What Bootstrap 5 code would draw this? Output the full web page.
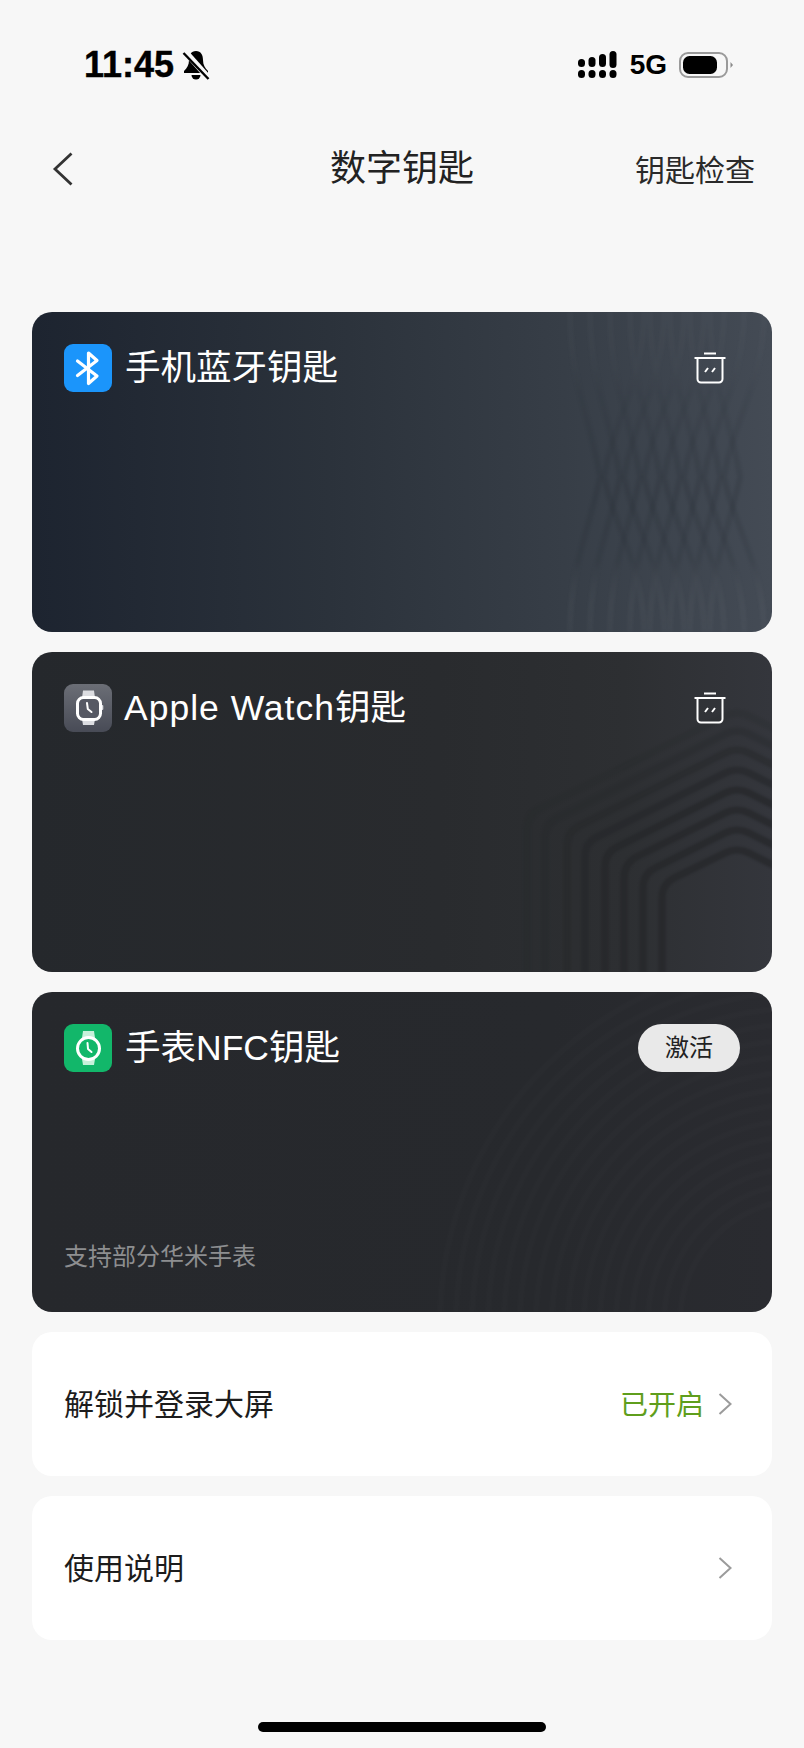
<!DOCTYPE html>
<html lang="zh-CN">
<head>
<meta charset="utf-8">
<title>数字钥匙</title>
<link rel="stylesheet" href="https://cdn.jsdelivr.net/npm/bootstrap@5.3.0/dist/css/bootstrap.min.css">
<style>
html,body{height:100%}
body{background:#f7f7f7;font-family:"Liberation Sans","Noto Sans CJK SC",sans-serif;color:#222;overflow:hidden}
.app-screen{width:804px;height:1748px}
.status-row{height:130px;padding:0 70px 0 84px}
.status-time{font-size:36px;font-weight:700;line-height:1;color:#000;-webkit-text-stroke:.4px #000}
.status-net{font-size:28px;font-weight:700;line-height:1;color:#000}
.head-row{height:76px;padding:2px 49px 0;display:grid;grid-template-columns:1fr auto 1fr;align-items:center}
.head-back{margin-left:3px}
.head-title{font-size:36px;font-weight:400;line-height:1.2;color:#222}
.head-link{font-size:30px;line-height:1.2;color:#2a2a2a;margin-top:3px}
.key-stack{margin-top:106px;padding:0 32px;gap:20px}
.key-card{height:320px;border:0;border-radius:20px;overflow:hidden;padding:32px 28px 38px 32px;color:#fff}
.key-blue{background:linear-gradient(90deg,#1d2430 0%,#2b323b 40%,#373e47 72%,#444b55 100%)}
.key-grey{background:linear-gradient(90deg,#25282c 0%,#292b2e 55%,#2d2f32 80%,#34363c 100%)}
.key-dark{background:linear-gradient(90deg,#26282c 0%,#27292d 70%,#2a2b30 100%)}
.key-art{position:absolute;left:0;top:0;width:740px;height:320px;filter:blur(.8px)}
.key-top,.key-note{position:relative}
.key-icon{width:48px;height:48px;border-radius:9px;flex:none}
.key-name{font-size:35.500px;line-height:48px;margin-left:13px}
.key-latin{margin-left:12px}
.key-latin span{letter-spacing:1px}
.trash-btn{width:32px;height:32px;margin-right:18px;display:block}
.activate-btn{width:102px;height:48px;padding:0;font-size:24px;line-height:46px;background:#e9e9e9;color:#222;border:0;margin-right:4px}
.key-note{font-size:24px;line-height:34px;color:#8d8e90}
.set-row{height:144px;border-radius:20px;padding:0 40px 0 32px;font-size:30px;color:#1c1c1c}
.set-state{font-size:28px;color:#5f9e1c;margin:3px 14px 0 0}
.home-bar{width:288px;height:10px;border-radius:5px;background:#000;margin:82px auto 0}
</style>
</head>
<body>
<div class="app-screen d-flex flex-column">

  <div class="status-row d-flex align-items-center justify-content-between">
    <div class="d-flex align-items-center gap-2">
      <span class="status-time">11:45</span>
      <svg width="28" height="30" viewBox="0 0 28 30">
        <path d="M14 1C9 1 7 5 7 10C7 15 5 18 2 21V23H26V21C23 18 21 15 21 10C21 5 19 1 14 1Z" fill="#000"/>
        <path d="M9.500 25a4.500 4.500 0 0 0 9 0z" fill="#000"/>
        <path d="M3 1.500L27 28.500" stroke="#f7f7f7" stroke-width="6"/>
        <path d="M1.500 3L26.500 29" stroke="#000" stroke-width="2.400"/>
      </svg>
    </div>
    <div class="d-flex align-items-center">
      <svg width="40" height="28" viewBox="0 0 40 28" fill="#000">
        <rect x="0" y="19" width="7" height="8" rx="3.500"/><rect x="10.500" y="19" width="7" height="8" rx="3.500"/><rect x="21" y="19" width="7" height="8" rx="3.500"/><rect x="31.500" y="19" width="7" height="8" rx="3.500"/>
        <rect x="0" y="8" width="7" height="8" rx="3.500"/><rect x="10.500" y="6" width="7" height="10" rx="3.500"/><rect x="21" y="3" width="7" height="13" rx="3.500"/><rect x="31.500" y="0" width="7" height="17" rx="3.500"/>
      </svg>
      <span class="status-net ms-2 ps-1 me-2 pe-1">5G</span>
      <svg width="55" height="26" viewBox="0 0 55 26">
        <rect x="1" y="1" width="47" height="24" rx="8" fill="none" stroke="#9a9a9a" stroke-width="2"/>
        <rect x="4" y="4" width="34" height="18" rx="6.500" fill="#000"/>
        <path d="M51.500 10L54 13L51.500 16Z" fill="#8a8a8a"/>
      </svg>
    </div>
  </div>

  <div class="head-row">
    <svg class="head-back" width="22" height="34" viewBox="0 0 22 34" fill="none" stroke="#333" stroke-width="2.800"><path d="M19.500 1.500L3 17L19.500 32.500"/></svg>
    <div class="head-title">数字钥匙</div>
    <div class="head-link text-end">钥匙检查</div>
  </div>

  <div class="key-stack d-flex flex-column">

    <div class="card key-card key-blue position-relative">
      <svg class="key-art" viewBox="0 0 740 320" aria-hidden="true">
        <defs>
          <linearGradient id="waveStroke" gradientUnits="userSpaceOnUse" x1="0" y1="0" x2="0" y2="320">
            <stop offset="0" stop-color="#fff" stop-opacity=".02"/>
            <stop offset=".25" stop-color="#1c2128" stop-opacity=".05"/>
            <stop offset=".55" stop-color="#1c2128" stop-opacity=".14"/>
            <stop offset=".78" stop-color="#1c2128" stop-opacity=".09"/>
            <stop offset="1" stop-color="#fff" stop-opacity=".02"/>
          </linearGradient>
          <path id="waveA" d="M0 0C0 70 20 105 30 165C20 215 0 255 0 320" fill="none" stroke="url(#waveStroke)" stroke-width="6"/>
          <path id="waveB" d="M0 0C0 70 -30 105 -40 165C-30 215 0 255 0 320" fill="none" stroke="url(#waveStroke)" stroke-width="6"/>
        </defs>
        <use href="#waveA" x="538"/><use href="#waveA" x="558"/><use href="#waveA" x="578"/><use href="#waveA" x="598"/><use href="#waveA" x="618"/><use href="#waveA" x="638"/><use href="#waveA" x="658"/><use href="#waveA" x="678"/>
        <use href="#waveB" x="612"/><use href="#waveB" x="632"/><use href="#waveB" x="652"/><use href="#waveB" x="672"/><use href="#waveB" x="692"/><use href="#waveB" x="712"/><use href="#waveB" x="732"/>
      </svg>
      <div class="key-top d-flex align-items-center justify-content-between">
        <div class="d-flex align-items-center">
          <svg class="key-icon" viewBox="0 0 48 48"><rect width="48" height="48" fill="#1b95fb"/><path d="M13.500 17L33 32L24.500 39.500V9L33 16.500L13.500 31.500" fill="none" stroke="#fff" stroke-width="3.200" stroke-linejoin="round" stroke-linecap="round"/></svg>
          <span class="key-name">手机蓝牙钥匙</span>
        </div>
        <svg class="trash-btn" viewBox="0 0 32 32" fill="none" stroke="#fff" stroke-width="2"><path d="M10 1.500H22M.5 6H31.500M3.500 6V27a3.500 3.500 0 0 0 3.500 3.500H25a3.500 3.500 0 0 0 3.500-3.500V6M11 20l3-4M18 20l3-4"/></svg>
      </div>
    </div>

    <div class="card key-card key-grey position-relative">
      <svg class="key-art" viewBox="0 0 740 320" fill="none" stroke="#25272a" stroke-width="7" stroke-opacity=".7" aria-hidden="true">
        <path d="M630 320V246Q630 232 642 226L693 201Q705 195 717 201L745 215"/>
        <path d="M611 320V236Q611 222 623 216L693 181Q705 175 717 181L745 195"/>
        <path d="M592 320V226Q592 212 604 205L693 161Q705 155 717 161L745 175"/>
        <path d="M573 320V215Q573 201 585 195L693 141Q705 135 717 141L745 155"/>
        <path d="M553 320V204Q553 191 565 185L693 121Q705 115 717 121L745 135" stroke-opacity=".6"/>
        <path d="M535 320V194Q535 180 547 174L693 101Q705 95 717 101L745 115" stroke-opacity=".5"/>
        <path d="M513 320V186Q513 172 525 166L693 82Q705 76 717 82L745 96" stroke-opacity=".35"/>
        <path d="M495 320V177Q495 163 507 157L693 64Q705 58 717 64L745 78" stroke-opacity=".2"/>
      </svg>
      <div class="key-top d-flex align-items-center justify-content-between">
        <div class="d-flex align-items-center">
          <svg class="key-icon" viewBox="0 0 48 48">
            <defs><linearGradient id="gWatch" x1="0" y1="0" x2="0" y2="1"><stop offset="0" stop-color="#6b6e76"/><stop offset="1" stop-color="#484b56"/></linearGradient></defs>
            <rect width="48" height="48" fill="url(#gWatch)"/>
            <path d="M18 14L19 6.500H30L31 14ZM18 35L19 41H30L31 35Z" fill="#dcdde1"/>
            <rect x="37.500" y="21" width="1.800" height="5" rx=".9" fill="#dcdde1"/>
            <rect x="13.500" y="13.500" width="23" height="22" rx="6" fill="#565964" stroke="#fff" stroke-width="3"/>
            <path d="M23 19L23.800 25L27.500 28" fill="none" stroke="#fff" stroke-width="2" stroke-linecap="round" stroke-linejoin="round"/>
          </svg>
          <span class="key-name key-latin"><span>Apple Watch</span>钥匙</span>
        </div>
        <svg class="trash-btn" viewBox="0 0 32 32" fill="none" stroke="#fff" stroke-width="2"><path d="M10 1.500H22M.5 6H31.500M3.500 6V27a3.500 3.500 0 0 0 3.500 3.500H25a3.500 3.500 0 0 0 3.500-3.500V6M11 20l3-4M18 20l3-4"/></svg>
      </div>
    </div>

    <div class="card key-card key-dark position-relative">
      <svg class="key-art" viewBox="0 0 740 320" fill="none" stroke="#fff" stroke-opacity=".011" stroke-width="7" aria-hidden="true">
        <circle cx="770" cy="330" r="362"/><circle cx="770" cy="330" r="346"/><circle cx="770" cy="330" r="330"/><circle cx="770" cy="330" r="314"/><circle cx="770" cy="330" r="298"/><circle cx="770" cy="330" r="282"/><circle cx="770" cy="330" r="266"/><circle cx="770" cy="330" r="250"/><circle cx="770" cy="330" r="234"/><circle cx="770" cy="330" r="218"/><circle cx="770" cy="330" r="202"/><circle cx="770" cy="330" r="186"/><circle cx="770" cy="330" r="170"/><circle cx="770" cy="330" r="154"/><circle cx="770" cy="330" r="138"/><circle cx="770" cy="330" r="122"/>
      </svg>
      <div class="key-top d-flex align-items-center justify-content-between">
        <div class="d-flex align-items-center">
          <svg class="key-icon" viewBox="0 0 48 48">
            <rect width="48" height="48" fill="#12b76a"/>
            <path d="M18 14L19 7H30L31 14ZM18 35L19 41H30L31 35Z" fill="#c6f1da"/>
            <circle cx="24.500" cy="24.500" r="11" fill="#12b76a" stroke="#fff" stroke-width="3"/>
            <path d="M23.500 19L24 25L27.500 28" fill="none" stroke="#fff" stroke-width="2" stroke-linecap="round" stroke-linejoin="round"/>
          </svg>
          <span class="key-name">手表NFC钥匙</span>
        </div>
        <button type="button" class="btn rounded-pill activate-btn">激活</button>
      </div>
      <div class="key-note mt-auto">支持部分华米手表</div>
    </div>

    <div class="set-row bg-white d-flex align-items-center justify-content-between">
      <span>解锁并登录大屏</span>
      <span class="d-flex align-items-center">
        <span class="set-state">已开启</span>
        <svg width="14" height="22" viewBox="0 0 14 22" fill="none" stroke="#9b9b9b" stroke-width="2"><path d="M1.500 1L12.500 11L1.500 21"/></svg>
      </span>
    </div>

    <div class="set-row bg-white d-flex align-items-center justify-content-between">
      <span>使用说明</span>
      <svg width="14" height="22" viewBox="0 0 14 22" fill="none" stroke="#9b9b9b" stroke-width="2"><path d="M1.500 1L12.500 11L1.500 21"/></svg>
    </div>
  </div>

  <div class="home-bar"></div>
</div>
<script src="https://cdn.jsdelivr.net/npm/bootstrap@5.3.0/dist/js/bootstrap.bundle.min.js"></script>
</body>
</html>
